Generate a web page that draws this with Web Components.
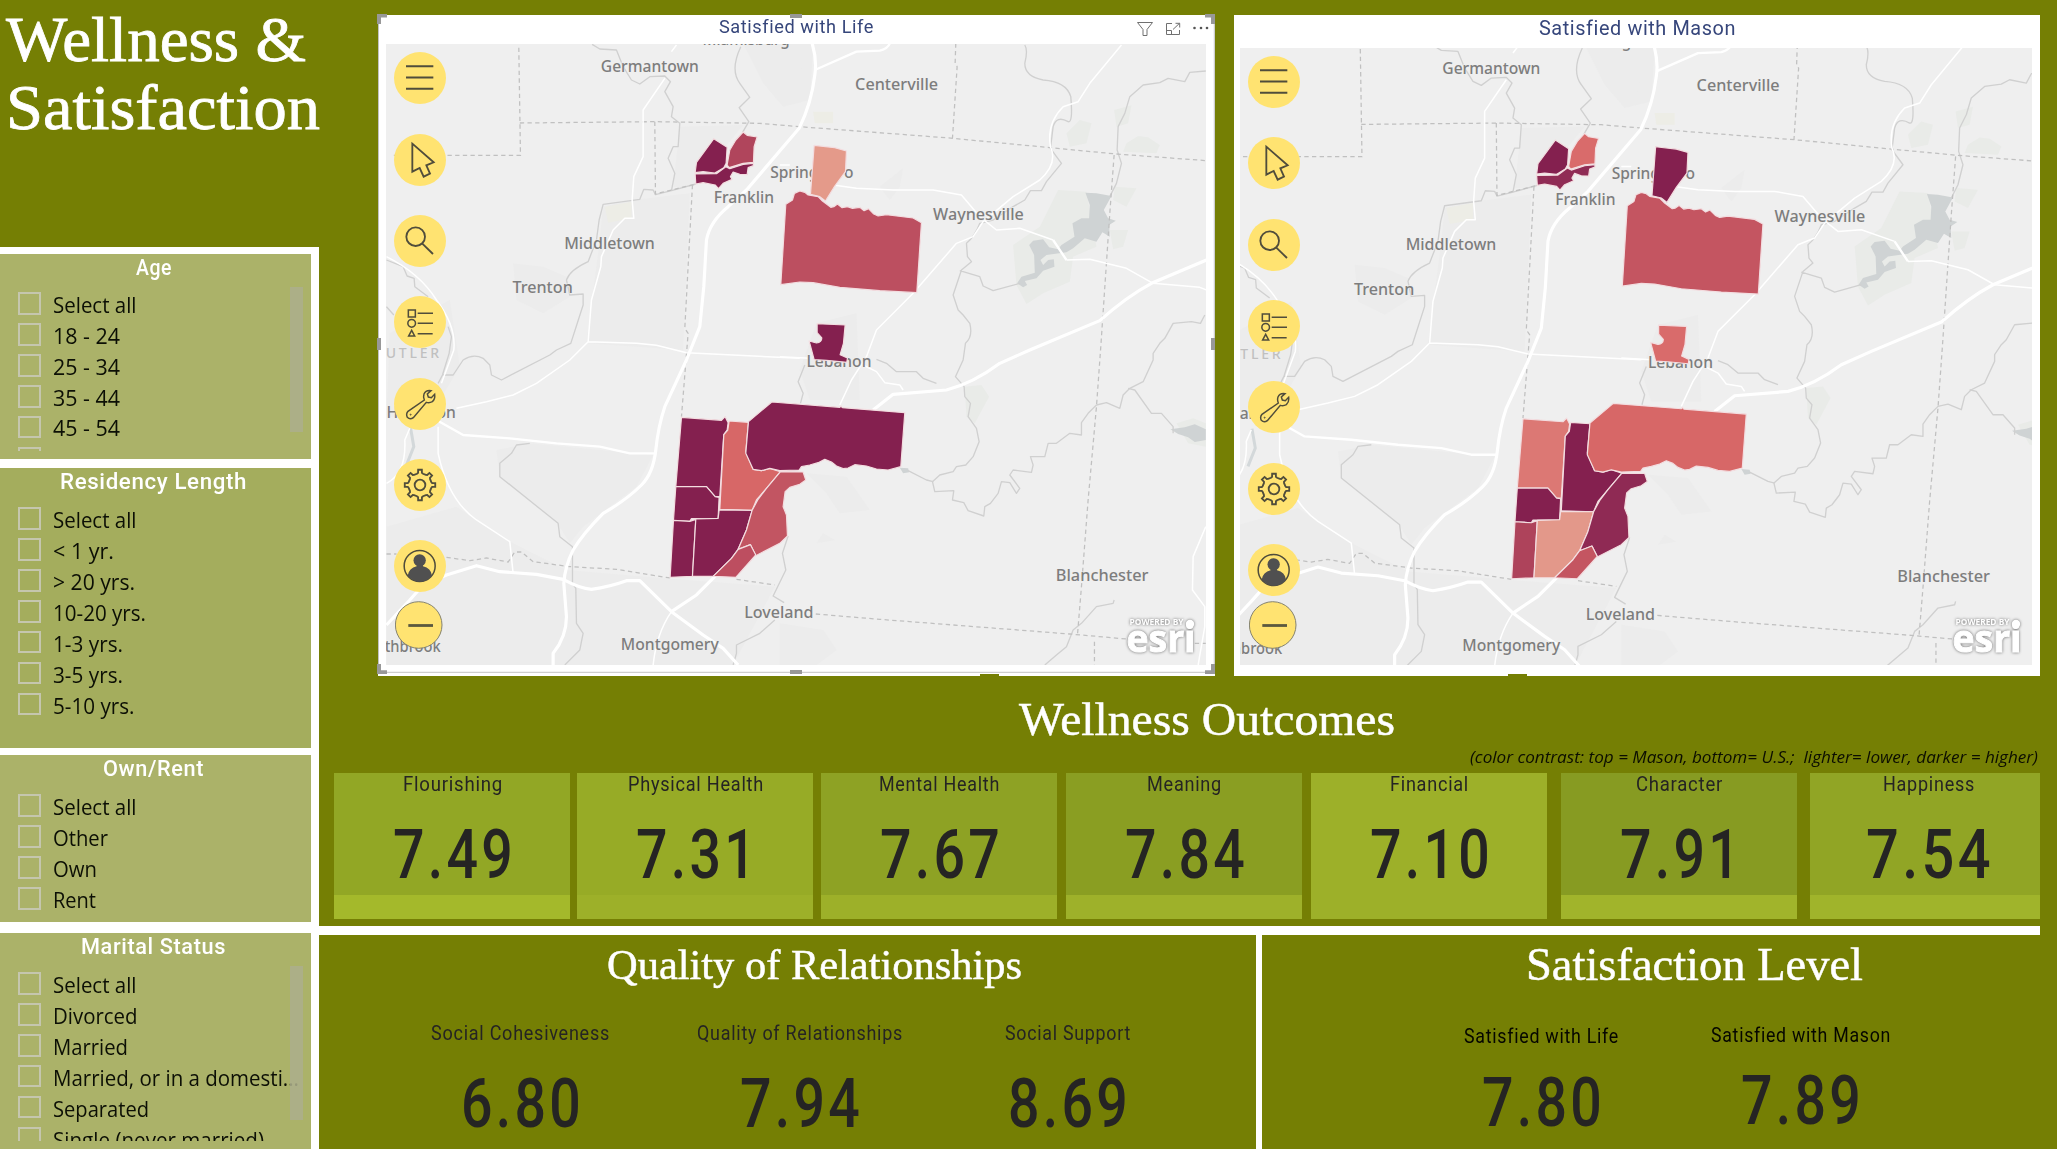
<!DOCTYPE html>
<html lang="en">
<head>
<meta charset="utf-8">
<title>Wellness &amp; Satisfaction</title>
<style>
html,body{margin:0;padding:0}
body{width:2057px;height:1149px;overflow:hidden;background:#757f04;font-family:Roboto,"Liberation Sans",sans-serif}
</style>
</head>
<body>
<wellness-dashboard></wellness-dashboard>
<script>
const shadow = (el, html) => { const r = el.attachShadow({mode:'open'}); r.innerHTML = html; return r; };

/* Single line of text stretched horizontally to the width given in "w". */
class FitText extends HTMLElement {
  connectedCallback() {
    if (this.shadowRoot) return;
    const r = shadow(this, `<style>:host{display:block;flex:none;white-space:pre}
      span{display:inline-block;transform-origin:0 50%;vertical-align:top}</style><span><slot></slot></span>`);
    const w = +this.getAttribute('w'), s = r.querySelector('span');
    this.style.width = w + 'px';
    const n = s.getBoundingClientRect().width;
    if (n) s.style.transform = `scaleX(${w / n})`;
  }
}
customElements.define('fit-text', FitText);

class CheckItem extends HTMLElement {
  connectedCallback() {
    if (this.shadowRoot) return;
    shadow(this, `<style>:host{display:flex;height:30.95px;padding-left:18px;gap:12.5px;align-items:center;flex:none}
      i{box-sizing:border-box;width:22.500px;height:22.500px;border:2px solid #c5c6ae;flex:none;margin-top:-1px}
      fit-text{font:22px/31px "Open Sans","Noto Sans",sans-serif;color:#0c0f05;padding-top:var(--drop,1.500px)}</style>
      <i></i><fit-text w="${this.getAttribute('w')}">${this.innerHTML}</fit-text>`);
  }
}
customElements.define('check-item', CheckItem);

class SlicerPanel extends HTMLElement {
  connectedCallback() {
    if (this.shadowRoot) return;
    const bar = this.getAttribute('bar');
    shadow(this, `<style>:host{display:flex;flex-direction:column;position:relative;box-sizing:border-box;width:311px;flex:none;background:var(--panel,#abb269)}
      header{display:flex;justify-content:center;padding-right:4px;font:500 21.5px/27px Roboto,sans-serif;letter-spacing:.6px;color:#fff}
      .list{display:flex;flex-direction:column;overflow:hidden;margin-top:var(--gap,8.5px);height:var(--list,auto)}
      .bar{position:absolute;left:290px;top:33px;width:12.5px;background:#acae8cdd}</style>
      <header><fit-text w="${this.getAttribute('w')}">${this.getAttribute('heading')}</fit-text></header>
      <div class="list"><slot></slot></div>${bar ? `<div class="bar" style="height:${bar}px"></div>` : ''}`);
  }
}
customElements.define('slicer-panel', SlicerPanel);

class ScoreMetric extends HTMLElement {
  connectedCallback() {
    if (this.shadowRoot) return;
    const a = n => this.getAttribute(n);
    shadow(this, `<style>:host{display:flex;flex-direction:column;align-items:center;width:236px;flex:none;color:#252423}
      .l{font:19.7px/22px Roboto,sans-serif;letter-spacing:.8px;padding-top:1px;margin-left:1px;color:var(--label,#252423)}
      .v{font:500 68px/70px Roboto,sans-serif;letter-spacing:4px;margin:var(--drop,23.6px) 0 0 4px}</style>
      <fit-text class="l" w="${a('w')}">${a('label')}</fit-text>
      <fit-text class="v" w="${a('vw') || 123}">${a('value')}</fit-text>`);
  }
}
customElements.define('score-metric', ScoreMetric);

class ScoreTile extends HTMLElement {
  connectedCallback() {
    if (this.shadowRoot) return;
    const a = n => this.getAttribute(n);
    shadow(this, `<style>:host{display:block;box-sizing:border-box;height:146.3px;padding-top:.6px;overflow:hidden;flex:none;
      background:linear-gradient(${a('top')} 122px,${a('foot')} 122px)}</style>
      <score-metric label="${a('label')}" w="${a('w')}" value="${a('value')}" vw="${a('vw') || 123}"></score-metric>`);
  }
}
customElements.define('score-tile', ScoreTile);

const gear = (cx, cy) => {
  let d = '';
  for (let k = 0; k < 8; k++) {
    const c = k * 45 - 90;
    [[-15,35],[-9,37],[-7,46],[7,46],[9,37],[15,35]].forEach(([t, r], i) => {
      const q = (c + t) * Math.PI / 180;
      d += (k || i ? 'L' : 'M') + (cx + r * Math.cos(q)).toFixed(1) + ' ' + (cy + r * Math.sin(q)).toFixed(1);
    });
  }
  return d + 'Z';
};
const ICONS = [
  [157, '<path d="M109 200H191M109 233.500H191M109 267.500H191" stroke-width="6"/>'],
  [401, '<path d="M128 430L192 486L170 495L181 520L162 529L150 503L128 514Z"/>'],
  [645, '<circle cx="138" cy="710" r="28"/><path d="M158 731L190 762"/>'],
  [889, '<g stroke-width="4.600"><path d="M116 931h21v21h-21zM126 992L117 1009H135ZM144 941H190M144 971H190M144 1002H189"/><circle cx="126" cy="971" r="11.500"/></g>'],
  [113, '<path stroke-width="4.400" d="M195 162L185 172L176 170L173 161L184 151Q168 149 163 161Q160 170 164 179L115 213Q108 221 113 231Q121 239 131 232L170 186Q179 189 188 184Q197 176 195 162Z"/><circle cx="123" cy="223" r="1.500" stroke-width="3"/>'],
  [357, `<path d="${gear(151, 435)}"/><circle cx="151" cy="435" r="16"/>`],
  [601, '<circle cx="150" cy="679" r="46.500" stroke-width="4.600"/><g fill="#505050" stroke="none"><circle cx="150" cy="662" r="18.500"/><path d="M141 670H159L160 680Q184 686 187 708Q172 726 150 726Q130 726 114 708Q118 685 141 680Z"/></g>']
];
class MapTools extends HTMLElement {
  connectedCallback() {
    if (this.shadowRoot) return;
    shadow(this, `<style>:host{display:flex;flex-direction:column;gap:29.330px}
      svg{display:block;width:52px;height:52px;border-radius:50%;background:#ffe371}</style>` +
      ICONS.map(([y, s]) => `<svg viewBox="73 ${y} 156 156" fill="none" stroke="#504d3b" stroke-width="5.500">${s}</svg>`).join(''));
  }
}
customElements.define('map-tools', MapTools);

const D = '#84204f';
const PALETTES = {
  life:  [D,'#b0455c',D,'#e49a8a','#bc4f60',D,D,'#d76767',D,D,D,D,'#c25562','#bd4e60'],
  mason: [D,'#d96b6b','#902c55',D,'#c45561','#d96b6b','#dc7874',D,'#d76767',D,'#ae435b','#e3988a','#8f2a54','#c45561']
};
/* Four map quadrants: NW, SW, NE, SE, in thirds of a pixel. */
const NW = s => `<g>${s}</g>`, SW = s => `<g transform="translate(0 1020)">${s}</g>`,
      NE = s => `<g transform="translate(1230 0)">${s}</g>`, SE = s => `<g transform="translate(1230 1020)">${s}</g>`;
const paths = (...l) => `<path d="${l.join('')}"/>`;
const label = (t, x, y, w) => `<text x="${x}" y="${y}" textLength="${w}" lengthAdjust="spacingAndGlyphs">${t}</text>`;

const mapBody = c => `
<g fill="#ececec" stroke="none">
 ${NW(paths('M430 790L520 800L590 830L600 890L520 940L440 900Z','M700 620L790 600L960 580L940 1050L650 1030L690 720Z','M1120 130L1330 130L1320 300L1240 320L1180 250Z','M60 1000L240 900L270 1100L180 1250L50 1250Z','M930 380L1120 375L970 560L910 560Z'))}
 ${SW(paths('M380 330L480 310L850 345L800 440L640 560L600 610L560 545L390 410Z','M50 560L260 500L430 610L590 690L900 716L1215 740L1090 975L50 975Z'))}
 ${NE(paths('M300 560L370 505L360 560L330 600Z','M110 970L230 940L240 1200L90 1200L60 1110Z','M20 140L70 190L40 300L0 260Z'))}
 ${SE(paths('M80 400L200 410L270 510L180 520L140 460Z','M110 610L130 580L165 600Z','M0 850L130 870L170 930L110 975L0 975Z'))}
</g>
<g fill="#e9ebe8" stroke="none">
 ${NE(paths('M920 575L835 570L780 680L700 735L710 855L740 912L790 880L870 845L880 770L950 740Z','M860 400L900 360L935 370L920 430L870 440Z','M1003 330L1055 316L1045 370L1010 380Z','M1040 430L1075 408L1105 412L1140 435L1130 460L1030 455Z','M1005 560L1070 565L1040 620L1000 600Z','M990 690L1045 690L1030 740L1000 748Z'))}
 ${SE(paths('M555 140L605 135L628 170L585 250L560 230Z','M1190 250L1240 235L1278 250V320L1225 310Z'))}
</g>
<g fill="#edede6" stroke="none">${NW(paths('M705 620L785 605V655L715 668Z'))}${NE(paths('M100 335H160V370H105Z'))}</g>
<g fill="#cfd3d4" stroke="none">
 ${NE(paths('M917 578L950 580L995 588L972 630L985 655L1008 662L988 675L990 710L968 697L950 725L915 715L880 745L860 757L800 765L782 780L790 795L805 780L822 778L824 800L790 812L770 835L735 843L742 855L730 862L712 850L725 830L765 818L763 765L748 735L760 722L790 718L808 742L835 748L845 735L884 710L878 670L905 655L928 655L930 615Z'))}
 ${SE(paths('M1172 268L1215 262L1245 253L1278 268V300L1245 306L1225 292L1195 282Z','M360 383L385 385L388 397L370 400Z'))}
</g>
<g fill="none" stroke="#d0d0d0" stroke-width="4" stroke-linejoin="round">
 ${NW(paths('M667 133L690 147L740 150L760 200L785 240L810 252L840 230L885 228L902 245L885 275L910 320L905 350L930 370L925 440L910 440L895 475L915 520L905 572','M1113 140Q1080 210 1110 250L1140 292L1108 323L1137 365L1118 398','M978 552L905 572L857 584L850 570L822 568L810 598L700 613L688 660L680 720L655 785Q600 810 590 840L600 885L640 882L640 915L603 1030L560 1050L540 1065L395 1140L365 1125L360 1095L340 1075Q310 1060 280 1080L250 1125L218 1125L205 1150','M50 780L100 800L112 828L133 835L135 860L175 890','M50 920L72 945','M235 980L245 1010L238 1060L218 1125'))}
 ${SW(paths('M480 310L440 315L425 340L390 370V410L565 550L570 590L608 620V730L618 745L620 850L640 880L630 930L585 975','M1255 588L1238 640L1248 690L1210 768L1243 788','M1215 840L1170 880L1100 915L1100 940L1090 975'))}
 ${NE(paths('M735 135Q745 150 735 190Q735 230 790 240Q860 245 873 290Q880 370 865 365Q830 345 820 380L812 445L845 490L800 545L785 572L752 572L735 600L700 620L640 660L600 670Q585 710 560 730L563 770L575 785L545 810L520 885L535 930L550 945L570 970Q580 1010 557 1030L550 1080L527 1130L553 1160L555 1190L572 1210L565 1250L590 1285L598 1325L580 1370L558 1395L530 1400L520 1415L480 1425L458 1445L465 1475L522 1472L518 1500L552 1508L565 1532L612 1548L615 1520L632 1510L655 1480L665 1445L690 1448L710 1480L720 1465L690 1425L700 1410L755 1417L760 1395L752 1370L795 1370L805 1330L830 1330L870 1300L905 1305V1268L925 1240L950 1215L980 1208L1020 1225L1030 1185L1050 1165L1090 1145L1120 1080L1120 1060L1140 1030L1155 1015L1180 970L1235 965L1262 970L1275 945','M540 812L600 830L610 858L640 872L720 850','M1278 213L1230 217L1215 245L1165 235L1140 248L1090 255L1050 290L1035 340L1015 380L1012 450L1025 490L1010 550L990 590'))}
 ${SE(paths('M1045 145L1065 150L1115 220H1145L1180 260V280','M290 58L320 70L350 95H410L430 115L470 130','M75 75L55 125L70 160L62 190','M385 392L440 420L460 425','M795 975L830 945L860 920L880 870L905 850L950 800L1000 790L1003 780'))}
</g>
<g fill="none" stroke="#d3d8da" stroke-width="9">${SW(paths('M122 262L132 320L110 375'))}</g>
<g fill="none" stroke="#c0c0c0" stroke-width="3.800" stroke-dasharray="13 10">
 ${NW(paths('M447 143L452 466H62','M450 369L855 365L1170 370L1290 380L1750 415L2040 443L2240 462L2510 482','M855 365L857 582L978 552','M968 555L945 985L955 1000L935 1250'))}
 ${SW(paths('M50 642H80','M230 652L300 662L350 654L415 666L435 636H455L490 665L600 680L740 688L900 714','M1100 718L1215 735'))}
 ${NE(paths('M528 130L526 190L532 200L518 415','M1003 465L990 640L963 1040L950 1220L925 1500L905 1760L893 1905'))}
 ${SE(paths('M108 822L300 838L870 882L1040 897','M1245 910H1278','M944 905V975'))}
</g>
<g fill="none" stroke="#fff" stroke-linejoin="round" stroke-width="4.500">
 ${NW(paths('M920 135L905 155','M885 235L820 330V470L792 530L787 600L792 655H765L730 690L695 770L693 800L665 900L655 1025L800 1030L860 1036L950 1058L1290 1075','M655 1025L600 1080L500 1150L430 1185L350 1205L260 1225','M50 770Q150 820 200 900Q260 980 252 1050L215 1150'))}
 ${SW(paths('M205 260V340Q235 480 320 540L420 605L430 700','M905 815Q860 880 850 975','M50 430Q110 400 105 300L120 265'))}
 ${NE(paths('M1025 135L930 250L895 305L850 320Q800 370 812 440Q835 490 780 540L700 590L610 665L580 710L530 730L400 880L290 990L260 1070L215 1140L180 1215','M0 495H30','M160 555L230 565L340 570L460 570L545 585L600 650L650 690L720 685L820 720','M860 780L930 778L1040 805L1120 850L1260 862L1280 870'))}
 ${SE(paths('M0 50L90 55','M250 75L290 95L315 128L360 135L370 150','M1278 560L1240 650L1238 750L1275 800V860L1255 975'))}
 <g stroke-width="7">${SW(paths('M200 240L280 285L420 295L560 310L690 320L780 340H860'))}${NE(paths('M105 210L230 155L300 152Q325 145 330 130','M820 720L860 780'))}</g>
 <g stroke-width="9.500">
 ${NW(paths('M1327 130Q1342 180 1335 225Q1325 310 1288 385L1130 570L1075 620Q1020 665 1010 720L1002 860L990 980L950 1080L885 1220Q865 1280 858 1350Q850 1420 815 1455Q770 1500 700 1540Q640 1600 610 1650Q585 1700 582 1750L590 1850Q590 1910 550 1960V1995'))}
 ${SW(paths('M50 855L120 780L160 735L230 705L320 677L390 695L500 703L580 718Q630 745 665 748Q720 740 770 722H810L905 815L1000 885L1060 925L1105 975','M905 815L980 765L1040 705'))}
 ${NE(paths('M280 1230L340 1183L500 1170Q580 1150 660 1090L750 1050L960 962Q1040 890 1115 850L1280 780'))}
 </g>
</g>
<g font-family="'Noto Sans','Open Sans',sans-serif" font-size="47" font-weight="500" fill="#7d7d7d" stroke="#efefef" stroke-width="5" stroke-opacity=".7" paint-order="stroke">
 ${NW(label('Miamisburg',998,136,262)+label('Germantown',693,217,294)+label('Middletown',583,747,272)+label('Trenton',428,880,181)+label('Franklin',1032,610,181)+label('Springboro',1201,533,250))}
 ${NE(label('Centerville',226,270,249)+label('Waynesville',460,661,272))}
 ${SW(label('Hamilton',50,233,208)+label('Northbrook',-35,937,248)+label('Loveland',1123,835,208)+label('Montgomery',753,929,294))}
 ${SW('<g fill="#c0c0c0" font-size="42"><text x="12" y="53" textLength="196">BUTLER</text></g>')}
 ${SE(label('Lebanon',80,80,195)+label('Blanchester',828,722,278))}
</g>
<g stroke="#f3dde0" stroke-width="3.600" stroke-linejoin="round">
 ${NW(`<path fill="${c[0]}" d="M1032 416L1072 442L1069 490L1062 503L1035 519L1000 515L976 518L980 487Z"/>
 <path fill="${c[1]}" d="M1120 396L1132 406L1162 411L1153 440L1151 487L1120 490L1078 503L1072 495L1080 450L1098 420Z"/>
 <path fill="${c[2]}" d="M976 522L1040 521L1068 500L1080 506L1120 493L1151 490V497L1135 503L1132 524L1110 523L1090 516L1082 530L1087 538L1060 550L1046 566L1036 555L1000 548L978 552Z"/>`)}
 ${NE(`<path fill="${c[3]}" d="M103 436L165 443L200 453L197 515L165 558L137 603L120 590L92 583Z"/>
 <path fill="${c[4]}" d="M18 613L38 600L44 580L60 573L75 577L85 585L115 590L128 603L140 612L153 622L162 620L173 612L187 623L203 620L218 625L240 622L253 632L266 626L282 642L295 648L320 644L400 654L425 668L411 878L300 872L180 862L100 848L60 846L3 854Z"/>
 <path fill="${c[5]}" d="M112 971L196 975L191 1030L181 1064L203 1074L201 1087L140 1081L103 1079L88 1023L110 1029Q126 1027 126 1014L112 998Z"/>`)}
 ${SW(`<path fill="${c[6]}" d="M935 232L1055 241L1066 230L1075 248L1072 270L1062 284L1050 470L1036 470L1010 440L918 440Z"/>
 <path fill="${c[7]}" d="M1078 243L1136 247L1128 335L1150 388L1175 392L1200 385L1232 395L1190 445L1160 480L1147 511L1050 508L1062 284L1074 270Z"/>
 <path fill="${c[8]}" d="M1136 245L1206 186L1410 202L1413 198L1418 203L1605 218L1593 380L1555 390L1520 387L1490 378L1455 374L1435 384L1420 386L1400 378L1385 366L1365 358L1345 368L1320 375L1295 380L1288 390L1230 392L1200 385L1175 392L1150 388L1128 340Z"/>
 <path fill="${c[9]}" d="M918 440H1010L1036 470L1048 472L1045 535L965 536L960 544L911 541Z"/>
 <path fill="${c[10]}" d="M911 541L960 544L978 538L968 709L901 712Z"/>
 <path fill="${c[11]}" d="M978 537L1045 535L1048 510L1147 511L1130 570L1105 628L1085 655L1030 709L968 709Z"/>
 <path fill="${c[12]}" d="M1232 395L1300 396L1308 420L1290 433L1260 442L1246 455L1240 500L1250 525L1253 588L1230 610L1158 647L1142 614L1105 628L1130 570L1147 511L1165 478L1190 445Z"/>
 <path fill="${c[13]}" d="M1105 628L1142 614L1158 645L1098 712L1030 709L1085 655Z"/>`)}
</g>`;

class RegionMap extends HTMLElement {
  connectedCallback() {
    if (this.shadowRoot) return;
    shadow(this, `<style>:host{display:block;position:relative;overflow:hidden;background:#efefef;flex:none}
      .map{display:block;width:100%;height:100%}
      map-tools{position:absolute;left:8.300px;top:8.400px}
      .zoom{position:absolute;left:9px;bottom:16.500px;width:48px;height:48px}
      .logo{position:absolute;right:3.500px;bottom:6px;width:84px;height:48px;filter:drop-shadow(0 0 1.500px #666)}</style>
      <svg class="map" viewBox="${this.getAttribute('view')}" preserveAspectRatio="none"><g transform="translate(370 0) scale(.33333)">${mapBody(PALETTES[this.getAttribute('palette')])}</g></svg>
      <map-tools></map-tools>
      <svg class="zoom" viewBox="0 0 48 48"><circle cx="23.700" cy="24" r="23.300" fill="#ffe371" stroke="#85836f"/><path d="M13.300 24.500H38" stroke="#5b583f" stroke-width="2.800"/></svg>
      <svg class="logo" viewBox="0 0 84 48" fill="#fff" font-family="'Open Sans','Noto Sans',sans-serif" font-weight="700">
       <text x="10.500" y="13.800" font-size="8.500" font-weight="700" textLength="54" lengthAdjust="spacingAndGlyphs">POWERED BY</text>
       <text x="7.500" y="40.500" font-size="38" stroke="#fff" stroke-width="1" textLength="69" lengthAdjust="spacingAndGlyphs">esri</text><circle cx="71" cy="13" r="4.200"/></svg>`);
  }
}
customElements.define('region-map', RegionMap);

class MapCard extends HTMLElement {
  connectedCallback() {
    if (this.shadowRoot) return;
    shadow(this, `<style>:host{display:flex;flex-direction:column;position:relative;box-sizing:border-box;height:660.500px;background:#fff;flex:none}
      header{display:flex;flex:none;box-sizing:border-box;color:#36467b;font-family:Roboto,sans-serif;letter-spacing:.6px}
      .notch{position:absolute;bottom:0;width:19px;height:2px;background:#757f04}</style>
      <header style="${this.getAttribute('head')}"><fit-text w="${this.getAttribute('w')}">${this.getAttribute('heading')}</fit-text></header>
      <slot></slot><div class="notch" style="left:${this.getAttribute('notch')}px"></div><slot name="over"></slot>`);
  }
}
customElements.define('map-card', MapCard);

/* Selection outline, resize handles and the visual header buttons of the active card. */
class SelectionFrame extends HTMLElement {
  connectedCallback() {
    if (this.shadowRoot) return;
    shadow(this, `<style>:host{display:block;position:absolute;left:-2px;top:-2px}svg{display:block}</style>
      <svg width="842" height="664" viewBox="376 13 842 664" fill="none">
      <path d="M378.500 16V672.300H1214.300V16" stroke="#c2c2c2"/>
      <path fill="#989898" d="M377 14H387V17.500H381V24H377ZM1205 14H1215V24H1211V17.500H1205ZM377 664H381V670.300H387V674H377ZM1211 664H1215V674H1205V670.300H1211ZM790 14H802V18H790ZM790 670H802V674H790ZM377 338H381V350H377ZM1211 338H1215V350H1211Z"/>
      <g stroke="#707070" stroke-width="1"><path d="M1137.500 22.500H1152.500L1147 29.500V35.500H1143V29.500Z"/>
      <path d="M1172 23.500H1166.500V34.500H1179.500V30M1166.500 30.500H1171.500V34.500M1173 29.500L1179.500 23.300M1175.500 23.300H1179.700V27.500"/></g>
      <g fill="#555"><circle cx="1194.500" cy="28" r="1.300"/><circle cx="1201" cy="28" r="1.300"/><circle cx="1207" cy="28" r="1.300"/></g></svg>`);
  }
}
customElements.define('selection-frame', SelectionFrame);

class WellnessDashboard extends HTMLElement {
  connectedCallback() {
    if (this.shadowRoot) return;
    const items = l => l.map(([t, w]) => `<check-item w="${w}">${t}</check-item>`).join('');
    shadow(this, `<style>
      :host{display:flex;width:2057px;height:1149px;background:#757f04}
      .serif{font-family:"Liberation Serif",serif;color:#fff;-webkit-text-stroke:.5px #fff}
      aside{display:flex;flex-direction:column;width:319px;flex:none}
      h1{margin:0;font-weight:400;font-size:64px;line-height:68.500px;height:247.300px;box-sizing:border-box;padding:5.700px 0 0 5.500px;-webkit-text-stroke:.8px #fff!important}
      .slicers{flex:1;background:#fff;display:flex;flex-direction:column;padding-top:7px}
      main{flex:1;display:flex;flex-direction:column;min-width:0}
      .maps{display:flex;padding:15px 0 0 59px;height:675.500px;box-sizing:border-box;flex:none}
      .outcomes{height:250.500px;box-sizing:border-box;padding-top:21px;display:flex;flex-direction:column;flex:none}
      h2{margin:0;font-weight:400;line-height:46px;font-size:46px}
      .note{font:italic 17px/24px "Open Sans","Noto Sans",sans-serif;color:#0b0d02;margin:2px 0 0 1151px}
      .tiles{display:flex;margin:4.300px 0 0 15px}
      .rule{height:8.500px;width:1721px;background:#fff;flex:none}
      .bottom{flex:1;display:flex}
      .rel{width:937px;box-sizing:border-box;padding-top:7.400px}
      .sat{flex:1;padding-top:7.200px}
      .divider{width:6px;background:#fff}
      .row{display:flex}
      </style>
      <aside>
        <h1 class="serif"><fit-text w="300">Wellness &amp;</fit-text><fit-text w="314">Satisfaction</fit-text></h1>
        <div class="slicers">
          <slicer-panel heading="Age" w="36" bar="144.700" style="height:204.700px;--gap:7.200px;--list:162.200px;--drop:.500px">${items([['Select all',83.5],['18 - 24',67],['25 - 34',67],['35 - 44',67],['45 - 54',67],['55 - 64',67]])}</slicer-panel>
          <slicer-panel heading="Residency Length" w="187" style="height:279.600px;margin-top:9px;--panel:#a4ad5d">${items([['Select all',83.5],['&lt; 1 yr.',61],['&gt; 20 yrs.',82],['10-20 yrs.',93],['1-3 yrs.',70],['3-5 yrs.',70],['5-10 yrs.',81.5]])}</slicer-panel>
          <slicer-panel heading="Own/Rent" w="101" style="height:167.400px;margin-top:7.400px">${items([['Select all',83.5],['Other',55],['Own',44],['Rent',43]])}</slicer-panel>
          <slicer-panel heading="Marital Status" w="145" bar="154" style="height:216px;margin-top:10.600px;--list:172.500px">${items([['Select all',83.5],['Divorced',84.5],['Married',75],['Married, or in a domesti...',246],['Separated',96],['Single (never married)',211]])}</slicer-panel>
        </div>
      </aside>
      <main>
        <div class="maps">
          <map-card style="width:837px" heading="Satisfied with Life" w="155" notch="602" head="height:29px;padding:.800px 0 0 340.500px;font-size:19px;line-height:22px">
            <region-map palette="life" view="386.200 44 820 621" style="width:820px;height:621px;margin-left:8px"></region-map>
            <selection-frame slot="over"></selection-frame>
          </map-card>
          <map-card style="width:806px;margin-left:19px" heading="Satisfied with Mason" w="197" notch="274" head="height:32.500px;padding:2px 0 0 304.500px;font-size:20.500px;line-height:22px">
            <region-map palette="mason" view="398.700 46.600 792 617.500" style="width:792px;height:617.500px;margin-left:6px"></region-map>
          </map-card>
        </div>
        <section class="outcomes">
          <h2 class="serif" style="padding-left:699.500px"><fit-text w="376">Wellness Outcomes</fit-text></h2>
          <fit-text class="note" w="568">(color contrast: top = Mason, bottom= U.S.;  lighter= lower, darker = higher)</fit-text>
          <div class="tiles">
            <score-tile label="Flourishing" w="100" value="7.49" top="#92a725" foot="#a4b92b" style="width:236px"></score-tile>
            <score-tile label="Physical Health" w="136" value="7.31" top="#97ab26" foot="#9db029" style="width:236px;margin-left:7px"></score-tile>
            <score-tile label="Mental Health" w="121" value="7.67" top="#8ea224" foot="#9db029" style="width:236px;margin-left:8px"></score-tile>
            <score-tile label="Meaning" w="75" value="7.84" top="#8a9e22" foot="#9eb12a" style="width:236px;margin-left:9px"></score-tile>
            <score-tile label="Financial" w="79" value="7.10" top="#9db029" foot="#9db029" style="width:236px;margin-left:9px"></score-tile>
            <score-tile label="Character" w="87" value="7.91" top="#879b22" foot="#a1b42b" style="width:236px;margin-left:14px"></score-tile>
            <score-tile label="Happiness" w="92" value="7.54" vw="128" top="#91a525" foot="#a0b42b" style="width:230px;margin-left:13px"></score-tile>
          </div>
        </section>
        <div class="rule"></div>
        <div class="bottom">
          <section class="rel">
            <h2 class="serif" style="font-size:42px;padding-left:288px"><fit-text w="415">Quality of Relationships</fit-text></h2>
            <div class="row" style="padding:34.400px 0 0 83px">
              <score-metric label="Social Cohesiveness" w="179" value="6.80"></score-metric>
              <score-metric label="Quality of Relationships" w="206" value="7.94" style="margin-left:43px"></score-metric>
              <score-metric label="Social Support" w="126" value="8.69" style="margin-left:32px"></score-metric>
            </div>
          </section>
          <div class="divider"></div>
          <section class="sat">
            <h2 class="serif" style="padding-left:264px"><fit-text w="337">Satisfaction Level</fit-text></h2>
            <div class="row" style="padding:37.300px 0 0 161px;--label:#050600">
              <score-metric label="Satisfied with Life" w="155" value="7.80" style="--drop:19.600px"></score-metric>
              <score-metric label="Satisfied with Mason" w="180" value="7.89" style="margin:-.700px 0 0 23px;--drop:18.800px"></score-metric>
            </div>
          </section>
        </div>
      </main>`);
  }
}
customElements.define('wellness-dashboard', WellnessDashboard);
</script>
</body>
</html>
